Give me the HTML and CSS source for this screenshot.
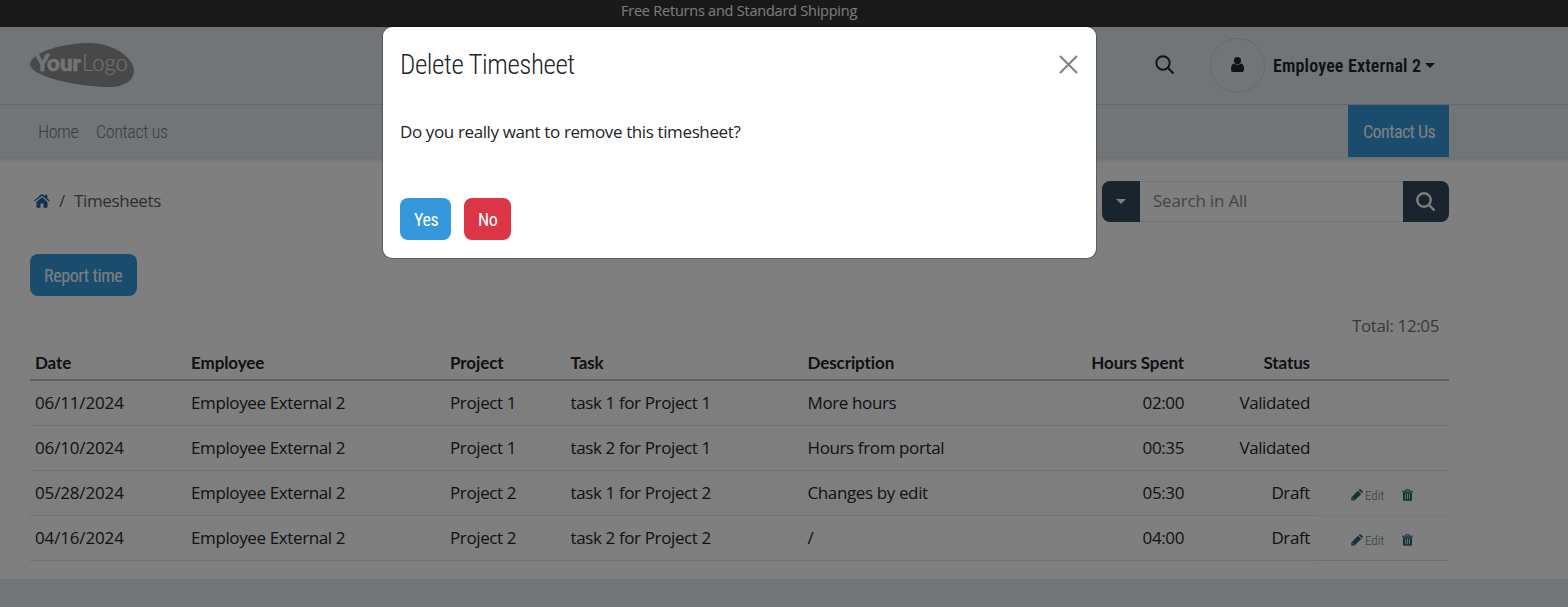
FILE: index.html
```html
<!DOCTYPE html>
<html lang="en">
<head>
<meta charset="utf-8">
<title>Timesheets</title>
<link rel="stylesheet" href="styles.css">
</head>
<body>
<svg width="0" height="0" class="defs">
  <symbol id="pencil" viewBox="0 0 12 12"><path d="M.3 8.4 7 1.7l3.2 3.2-6.7 6.7H.3zM7.7 1 8.600.2q.5-.4 1 0l2 2q.5.6 0 1.100l-.8.9z"/><path d="m1.500 8.900 1.600 1.600" stroke="#eee" stroke-width=".8"/></symbol>
  <symbol id="trash" viewBox="0 0 11 12"><path fill-rule="evenodd" d="M0 1.700h3L3.700.3h3.600L8 1.700h3v1H0zm4.100 0h2.800l-.3-.6H4.400zM1 3.300h9v7.400q0 1-1 1H2q-1 0-1-1zM3 4.500v5.700h.8V4.500zm2.100 0v5.700h.8V4.500zm2.100 0v5.700H8V4.500z"/></symbol>
  <symbol id="lens" viewBox="0 0 20 20"><circle cx="8" cy="8" r="6.700"/><path d="m13 13 5.500 5.500"/></symbol>
</svg>
<div class="page">
  <div class="topbar"><span class="pt promo">Free Returns and Standard Shipping</span></div>
  <header class="header">
    <svg class="logo" width="104" height="44" viewBox="0 0 104 44">
      <path fill="#909090" d="M0 21C2 8 36 0 59 0c25 0 45 15 45 28 0 10-11 16-24 16C49 44 0 34 0 21z"/>
      <text class="logo-bold" x="5" y="28" textLength="46" lengthAdjust="spacingAndGlyphs">Your</text>
      <text class="logo-light" x="52" y="28" textLength="46" lengthAdjust="spacingAndGlyphs">Logo</text>
    </svg>
    <svg class="find" width="20" height="20"><use href="#lens"/></svg>
    <span class="avatar"><svg width="13" height="15" viewBox="0 0 13 15"><circle cx="6.500" cy="3.600" r="3.600"/><path d="M3 6.500q3.500 2.500 7 0Q13 7 13 12.500q0 2.500-2 2.500H2q-2 0-2-2.500Q0 7 3 6.500z"/></svg></span>
    <span class="ds user">Employee External 2</span><i class="caret"></i>
  </header>
  <nav class="nav">
    <a class="ds home">Home</a><a class="ds contact">Contact us</a>
    <a class="cta"><span class="ds">Contact Us</span></a>
  </nav>
  <main class="main">
    <div class="tools">
      <svg class="house" width="16" height="14" viewBox="0 0 16 14"><path d="M8 3.300 13.500 8v5q0 .8-.8.8H9.500V9.500h-3v4.300H3.300q-.8 0-.8-.8V8z"/><path d="M8 .2q.6 0 1 .4l2 1.700V.8h2.300V4.200L16 6.700l-.8.9L8 1.700.8 7.600 0 6.700 7 .6q.4-.4 1-.4z"/></svg>
      <span class="pt slash">/</span><span class="pt crumb">Timesheets</span>
      <div class="search"><span class="filter"><i class="caret"></i></span><span class="field"><span class="pt">Search in All</span></span><span class="go"><svg width="20" height="20"><use href="#lens"/></svg></span></div>
    </div>
    <a class="btn report"><span class="ds">Report time</span></a>
    <div class="total"><span class="pt">Total: 12:05</span></div>
    <table class="sheet">
      <colgroup><col class="c1"><col class="c2"><col class="c3"><col class="c4"><col class="c5"><col class="c6"><col class="c7"><col class="c8"></colgroup>
      <thead><tr><th>Date</th><th>Employee</th><th>Project</th><th>Task</th><th>Description</th><th class="r">Hours Spent</th><th class="r">Status</th><th></th></tr></thead>
      <tbody>
        <tr><td class="date">06/11/2024</td><td>Employee External 2</td><td>Project 1</td><td>task 1 for Project 1</td><td>More hours</td><td class="r">02:00</td><td class="r">Validated</td><td></td></tr>
        <tr><td class="date">06/10/2024</td><td>Employee External 2</td><td>Project 1</td><td>task 2 for Project 1</td><td>Hours from portal</td><td class="r">00:35</td><td class="r">Validated</td><td></td></tr>
        <tr><td class="date">05/28/2024</td><td>Employee External 2</td><td>Project 2</td><td>task 1 for Project 2</td><td>Changes by edit</td><td class="r">05:30</td><td class="r">Draft</td><td class="act"><div><svg width="12" height="12"><use href="#pencil"/></svg><span class="ds">Edit</span><svg width="11" height="12"><use href="#trash"/></svg></div></td></tr>
        <tr><td class="date">04/16/2024</td><td>Employee External 2</td><td>Project 2</td><td>task 2 for Project 2</td><td>/</td><td class="r">04:00</td><td class="r">Draft</td><td class="act last"><div><svg width="12" height="12"><use href="#pencil"/></svg><span class="ds">Edit</span><svg width="11" height="12"><use href="#trash"/></svg></div></td></tr>
      </tbody>
    </table>
  </main>
  <footer class="footer"></footer>
</div>
<div class="backdrop">
  <section class="modal">
    <div class="modal-head"><h5 class="ds">Delete Timesheet</h5><svg width="19" height="19" viewBox="0 0 19 19"><path d="m1 1 17 17M18 1 1 18"/></svg></div>
    <p class="pt">Do you really want to remove this timesheet?</p>
    <div class="actions"><a class="btn yes"><span class="ds">Yes</span></a><a class="btn no"><span class="ds">No</span></a></div>
  </section>
</div>
</body>
</html>
```
FILE: styles.css
```css
* { box-sizing: border-box; }
body { margin: 0; height: 607px; overflow: hidden; background: #fff; color: #212529; font: 17px/27px "Open Sans", sans-serif; letter-spacing: -.38px; }
.defs { position: absolute; }
.page { height: 607px; display: flex; flex-direction: column; }
.pt, .ds { white-space: nowrap; }
.ds { font-family: Roboto, sans-serif; font-size: 18px; font-stretch: 75%; font-weight: 300; letter-spacing: -.4px; }
.topbar { height: 27px; background: #333; color: #f8f9fa; padding-left: 621px; font-size: 14.500px; line-height: 21px; letter-spacing: -.23px; }
.header { height: 78px; background: #e4ebf1; border-bottom: 1px solid #cbd1d7; padding-left: 30px; display: flex; align-items: center; }
.logo { margin: 0 1021px 2px 0; flex: none; letter-spacing: 0; }
.logo-bold { font: 900 23px Lato, sans-serif; fill: #e4ebf1; stroke: #e4ebf1; stroke-width: .6; }
.logo-light { font: 300 23px Lato, sans-serif; fill: #e4ebf1; }
.find { fill: none; stroke: #212529; stroke-width: 1.900; margin: 0 35px 2px 0; }
.avatar { width: 55px; height: 55px; border: 1px solid #cbd1d7; border-radius: 50%; display: flex; align-items: center; justify-content: center; margin-right: 8px; fill: #212529; }
.avatar svg { margin-bottom: 2px; }
.user { font-weight: 600; width: 148px; letter-spacing: .15px; }
.caret { width: 0; height: 0; border: 5px solid transparent; border-top-color: currentColor; border-bottom: 0; margin-left: 4px; }
.nav { height: 53px; background: #e4ebf1; border-bottom: 1px solid #dce2e8; box-shadow: 0 2px 4px #0002; display: flex; padding-left: 38px; line-height: 54px; color: #75797d; }
.home { width: 58px; }
.contact { width: 1252px; }
.cta { width: 101px; height: 52px; background: #3498db; color: #fff; padding-left: 15px; line-height: 53px; }
.cta span { letter-spacing: -.6px; }
.main { height: 421px; padding: 23px 119px 0 30px; }
.tools { display: flex; height: 41px; align-items: center; padding-left: 4px; color: #5b6065; }
.house { fill: #1b6599; margin: 0 9px 2px 0; }
.slash { width: 15px; }
.slash, .crumb { padding-bottom: 3px; }
.search { display: flex; width: 347px; height: 41px; margin-left: auto; }
.filter { width: 38px; background: #34495e; color: #fff; border-radius: 8px 0 0 8px; display: flex; align-items: center; padding-left: 10px; }
.field { flex: 1; border: 1px solid #dee2e6; border-width: 1px 0; padding: 5px 13px; color: #85898d; letter-spacing: -.2px; }
.go { width: 46px; background: #34495e; border-radius: 0 8px 8px 0; display: flex; align-items: center; justify-content: center; fill: none; stroke: #fff; stroke-width: 2.400; }
.btn { display: flex; height: 42px; border-radius: 8px; background: #3498db; color: #fff; line-height: 44px; padding-left: 14px; }
.report { width: 107px; margin-top: 32px; }
.report span, .cta span { font-weight: 400; }
.total { height: 49px; margin-top: 1px; padding: 15px 10px 0; text-align: right; color: #6c757d; }
.sheet { table-layout: fixed; border-collapse: separate; border-spacing: 0; width: 1419px; }
.c1 { width: 156px; } .c2 { width: 259px; } .c3 { width: 120.500px; } .c4 { width: 237px; } .c5 { width: 257px; } .c6 { width: 129.500px; } .c7 { width: 126px; }
th, td { padding: 0 5px; text-align: left; white-space: nowrap; }
th { height: 35px; font-family: Lato, sans-serif; font-size: 17px; font-weight: 700; letter-spacing: -.1px; border-bottom: 2px solid #bcbfc2; }
td { height: 45px; border-bottom: 1px solid #dee2e6; padding-bottom: 1px; }
.date { letter-spacing: -.15px; }
tbody tr:nth-child(odd) td { background: #fdfdfd; }
.r { text-align: right; }
.act { padding-left: 36px; border-color: #edf0f2; color: #56808c; }
.last { border-color: #d8e3ed; }
.act div { display: flex; align-items: center; padding-top: 5px; fill: #1c6874; }
.act span { margin-left: 2px; width: 37px; font-size: 13px; letter-spacing: 0; }
.footer { flex: 1; background: #e4ebf1; }
.backdrop { position: absolute; inset: 0; background: #00000080; padding: 27px 0 0 383px; }
.modal { width: 713px; height: 231px; background: #fff; border-radius: 9px; padding: 17px; box-shadow: 0 0 0 1px #0004; }
.modal-head { display: flex; justify-content: space-between; align-items: center; height: 41px; stroke: #808080; stroke-width: 2; fill: none; }
h5 { margin: 2px 0 0; stroke: none; }
h5.ds { font-size: 27px; letter-spacing: -.45px; }
.modal p { margin: 33px 0 0; height: 80px; }
.modal-head svg { margin: 0 1px 1px 0; }
.actions { display: flex; gap: 13px; }
.yes { width: 51px; }
.no { width: 47px; background: #dc3545; }
.yes span, .no span { font-weight: 400; }
```
